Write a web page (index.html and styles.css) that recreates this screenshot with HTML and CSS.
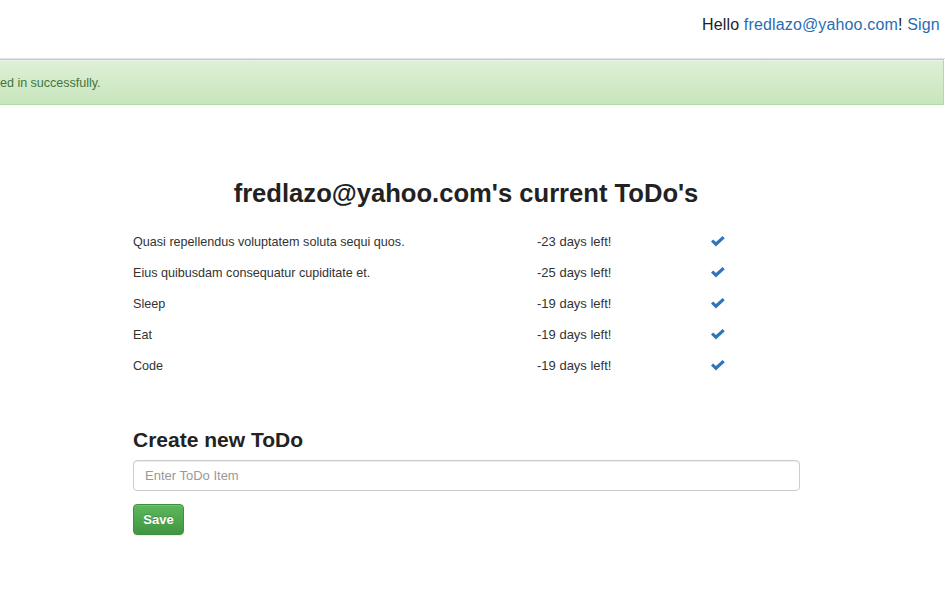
FILE: index.html
```html
<!DOCTYPE html>
<html>
<head>
<meta charset="utf-8">
<link rel="stylesheet" href="styles.css">
</head>
<body>
<header class="navbar">
  <div class="nav-right">Hello <a href="#">fredlazo@yahoo.com</a>! <a href="#">Sign</a></div>
</header>
<div class="alert"><span class="alert-text">ed in successfully.</span></div>
<main class="container">
  <h1 class="title">fredlazo@yahoo.com's current ToDo's</h1>
  <div class="todos">
    <div class="todo"><span class="desc">Quasi repellendus voluptatem soluta sequi quos.</span><span class="days">-23 days left!</span><span class="check"><svg viewBox="0 0 14 11" width="14" height="11"><polygon points="0,5.6 2.2,3.5 4.9,6.1 11.6,0 13.8,2.2 4.9,10.6" fill="#2f76b8"/></svg></span></div>
    <div class="todo"><span class="desc">Eius quibusdam consequatur cupiditate et.</span><span class="days">-25 days left!</span><span class="check"><svg viewBox="0 0 14 11" width="14" height="11"><polygon points="0,5.6 2.2,3.5 4.9,6.1 11.6,0 13.8,2.2 4.9,10.6" fill="#2f76b8"/></svg></span></div>
    <div class="todo"><span class="desc">Sleep</span><span class="days">-19 days left!</span><span class="check"><svg viewBox="0 0 14 11" width="14" height="11"><polygon points="0,5.6 2.2,3.5 4.9,6.1 11.6,0 13.8,2.2 4.9,10.6" fill="#2f76b8"/></svg></span></div>
    <div class="todo"><span class="desc">Eat</span><span class="days">-19 days left!</span><span class="check"><svg viewBox="0 0 14 11" width="14" height="11"><polygon points="0,5.6 2.2,3.5 4.9,6.1 11.6,0 13.8,2.2 4.9,10.6" fill="#2f76b8"/></svg></span></div>
    <div class="todo"><span class="desc">Code</span><span class="days">-19 days left!</span><span class="check"><svg viewBox="0 0 14 11" width="14" height="11"><polygon points="0,5.6 2.2,3.5 4.9,6.1 11.6,0 13.8,2.2 4.9,10.6" fill="#2f76b8"/></svg></span></div>
  </div>
  <h3 class="subtitle">Create new ToDo</h3>
  <form class="new-form">
    <input class="input" type="text" placeholder="Enter ToDo Item">
    <button class="btn" type="button">Save</button>
  </form>
</main>
</body>
</html>
```
FILE: styles.css
```css
html, body {
  margin: 0;
  padding: 0;
  overflow: hidden;
}
body {
  font-family: "Liberation Sans", Arial, sans-serif;
  font-size: 13px;
  color: #333;
  background: #fff;
  width: 945px;
  height: 600px;
}
a { color: #2a6cb3; text-decoration: none; }

.navbar {
  height: 58px;
  border-bottom: 1px solid #e4e0ea;
  display: flex;
  align-items: flex-start;
  padding-left: 702px;
  overflow: hidden;
  white-space: nowrap;
}
.nav-right {
  margin-top: 15px;
  font-size: 16px;
  line-height: 20px;
  letter-spacing: 0.15px;
  color: #222;
}

.alert {
  height: 44px;
  border: 1px solid #b2dba1;
  border-left: none;
  margin-right: 1px;
  background: linear-gradient(to bottom, #dff0d8 0%, #c8e5bc 100%);
  box-shadow: inset 0 1px 0 rgba(255,255,255,.25);
  display: flex;
  align-items: center;
  overflow: hidden;
  white-space: nowrap;
  color: #3c763d;
  font-size: 12.5px;
}
.alert-text {
  padding-top: 2px;
}

.container {
  width: 666px;
  margin-left: 133px;
}
.title {
  margin: 73px 0 0;
  text-align: center;
  font-family: "Liberation Sans", Arial, sans-serif;
  font-size: 25.6px;
  font-weight: 700;
  line-height: 30px;
  color: #222;
}
.todos {
  margin-top: 18px;
}
.todo {
  display: grid;
  grid-template-columns: 404px 174px 1fr;
  height: 31px;
  align-items: center;
  font-size: 12.6px;
}
.days { font-size: 13px; }
.check svg { display: block; }

.subtitle {
  margin: 47px 0 0;
  font-size: 21px;
  font-weight: 700;
  line-height: 24px;
  color: #222;
}
.new-form {
  margin-top: 8px;
}
.input {
  display: block;
  box-sizing: border-box;
  width: 667px;
  height: 31px;
  padding: 4px 11px;
  font-family: "Liberation Sans", Arial, sans-serif;
  font-size: 13px;
  border: 1px solid #ccc;
  border-radius: 4px;
  box-shadow: inset 0 1px 1px rgba(0,0,0,.075);
  color: #555;
}
.input::placeholder { color: #999; }
.btn {
  margin-top: 13px;
  display: block;
  width: 51px;
  height: 31px;
  padding: 0;
  font-family: "Liberation Sans", Arial, sans-serif;
  font-size: 13px;
  font-weight: 700;
  color: #fff;
  background: linear-gradient(to bottom, #5cb85c 0%, #419641 100%);
  border: 1px solid #3e8f3e;
  border-radius: 4px;
  box-shadow: inset 0 1px 0 rgba(255,255,255,.15), 0 1px 1px rgba(0,0,0,.075);
  text-shadow: 0 -1px 0 rgba(0,0,0,.2);
}
```
